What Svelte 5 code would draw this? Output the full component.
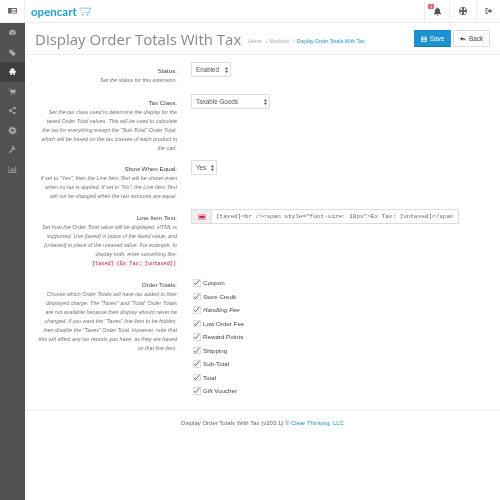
<script>
const navIcons = [
	{ d: "M8 3a6 6 0 0 0-6 6c0 1.2.3 2.2.9 3h10.2c.6-.8.9-1.8.9-3a6 6 0 0 0-6-6zM8 10a1.2 1.2 0 0 1-.6-2.2L10.500 5.500 9.200 8.900A1.200 1.200 0 0 1 8 10z" },
	{ d: "M1 3h5l8 7-4.500 4.500L2 7zM4 5a1 1 0 1 0 0 .1z" },
	{ d: "M6 2h4v2h2v3h2v3h-2v4h-3v-3H7v3H4v-4H2V7h2V4h2z", active: true },
	{ d: "M1 3h2.500l.5 2h10l-1.500 5.500H5L3 4.500H1zM5 12h2v2H5zM11 12h2v2h-2z" },
	{ d: "M12 1.500a2 2 0 1 1-1.600 3.200L6 7.200a2 2 0 0 1 0 1.600l4.400 2.500a2 2 0 1 1-.7 1.200L5 10a2.200 2.200 0 1 1 0-4l4.700-2.500A2 2 0 0 1 12 1.500z" },
	{ d: "M7 1h2l.4 2 1.300.5L12.400 2.400l1.400 1.400-1.100 1.700.5 1.300 2 .4v2l-2 .4-.5 1.300 1.100 1.700-1.400 1.400-1.700-1.100-1.300.5L9 15H7l-.4-2-1.300-.5-1.700 1.100-1.400-1.400 1.100-1.700-.5-1.300-2-.4v-2l2-.4.5-1.300-1.100-1.700 1.400-1.400 1.700 1.100 1.300-.5zM8 5.500a2.500 2.500 0 1 0 0 5 2.500 2.500 0 0 0 0-5z" },
	{ d: "M14 4.500a4 4 0 0 1-5.300 3.800L3.500 14.500 1.500 12.700 7.700 7.300A4 4 0 0 1 11.500 1L9.500 3.500l1 2 2 .5z" },
	{ d: "M1 2h1v11h13v1H1zM4 8h1.500v4H4zM7 5h1.500v7H7zM10 7h1.500v5H10zM13 3h1.500v9H13z" }
];
const totals = [
	{ name: "Coupon" },
	{ name: "Store Credit" },
	{ name: "Handling Fee", italic: true },
	{ name: "Low Order Fee" },
	{ name: "Reward Points" },
	{ name: "Shipping" },
	{ name: "Sub-Total" },
	{ name: "Total" },
	{ name: "Gift Voucher" }
];
const lineItem = `[taxed]<br /><span style="font-size: 10px">Ex Tax: [untaxed]</span>`;
</script>

<div class="page">
	<header>
		<button class="toggle" aria-label="menu">
			<svg viewBox="0 0 16 10" width="9" height="5.500"><path fill="#666" d="M0 0h16v10H0zM6 2v1.500h8V2zM6 4.500V6h8V4.500zM6 7v1.500h8V7z" fill-rule="evenodd"/></svg>
		</button>
		<div class="logo">
			<span>opencart</span>
			<svg viewBox="0 0 14 10" width="13" height="9"><path fill="none" stroke="#23a1d1" stroke-width="0.6" d="M0 1.300h13.500M12.500 1.300l-1.800 4.700H7M1 3.500h1.500M3 6h1.500"/><circle cx="4" cy="8.600" r=".8" fill="#23a1d1"/><circle cx="9.500" cy="8.600" r=".8" fill="#23a1d1"/></svg>
		</div>
		<div class="spacer"></div>
		<div class="hbtn bell">
			<svg viewBox="0 0 16 16" width="9" height="9"><path fill="#555" d="M8 1a1 1 0 0 1 1 1c2.300.5 3.500 2.300 3.500 5 0 3 1 4 2 5v1h-13v-1c1-1 2-2 2-5 0-2.700 1.200-4.500 3.500-5a1 1 0 0 1 1-1zM6.500 14h3a1.500 1.500 0 0 1-3 0z"/></svg>
			<span class="badge">1</span>
		</div>
		<div class="hbtn globe">
			<svg viewBox="0 0 16 16" width="8" height="8"><path fill="#666" fill-rule="evenodd" d="M8 0a8 8 0 1 1 0 16A8 8 0 0 1 8 0zM6 1.500A6.800 6.800 0 0 0 1.400 6H6zM10 1.500V6h4.600A6.800 6.800 0 0 0 10 1.500zM6 10H1.400A6.800 6.800 0 0 0 6 14.500zM10 10v4.500a6.800 6.800 0 0 0 4.600-4.500z"/></svg>
		</div>
		<div class="hbtn exit">
			<svg viewBox="0 0 16 16" width="8" height="8"><path fill="#777" d="M6 2H1v12h5v-2H3V4h3zM9 3l6 5-6 5v-3H5V6h4z"/></svg>
		</div>
	</header>

	<div class="main">
		<nav>
			{#each navIcons as icon}
				<div class="nav-item" class:active={icon.active}>
					<svg viewBox="0 0 16 16" width="9" height="9"><path fill-rule="evenodd" d={icon.d}/></svg>
				</div>
			{/each}
		</nav>

		<div class="content">
			<div class="heading">
				<h1>Display Order Totals With Tax</h1>
				<div class="crumbs">
					<span>Home</span><i>/</i><span>Modules</span><i>/</i><a href="#top">Display Order Totals With Tax</a>
				</div>
				<div class="spacer"></div>
				<button class="btn save">
					<svg viewBox="0 0 16 16" width="6" height="6"><path fill="#fff" fill-rule="evenodd" d="M1 1h11l3 3v11H1zM4 2.500V6h7V2.500zM4 9v4.500h8V9z"/></svg>
					Save
				</button>
				<button class="btn back">
					<svg viewBox="0 0 16 16" width="6" height="6"><path fill="#444" d="M6 2v3.500c5 0 9 1.500 9 8.500-1.500-3.500-4.500-4.500-9-4.500V13L0 7.500z"/></svg>
					Back
				</button>
			</div>

			<form>
				<div class="row status">
					<div class="label">
						<strong>Status:</strong>
						<p>Set the status for this extension.</p>
					</div>
					<div class="field">
						<span class="sel sel-status">
							<select><option>Enabled</option></select>
							<svg viewBox="0 0 4 8" width="3" height="6"><path fill="#444" d="M2 0l2 3H0zM2 8L0 5h4z"/></svg>
						</span>
					</div>
				</div>

				<div class="row tax">
					<div class="label">
						<strong>Tax Class:</strong>
						<p>Set the tax class used to determine the display for the<br>taxed Order Total values. This will be used to calculate<br>the tax for everything except the "Sub-Total" Order Total,<br>which will be based on the tax classes of each product in<br>the cart.</p>
					</div>
					<div class="field">
						<span class="sel sel-tax">
							<select><option>Taxable Goods</option></select>
							<svg viewBox="0 0 4 8" width="3" height="6"><path fill="#444" d="M2 0l2 3H0zM2 8L0 5h4z"/></svg>
						</span>
					</div>
				</div>

				<div class="row equal">
					<div class="label">
						<strong>Show When Equal:</strong>
						<p>If set to "Yes", then the Line Item Text will be shown even<br>when no tax is applied. If set to "No", the Line Item Text<br>will not be changed when the two amounts are equal.</p>
					</div>
					<div class="field">
						<span class="sel sel-yes">
							<select><option>Yes</option></select>
							<svg viewBox="0 0 4 8" width="3" height="6"><path fill="#444" d="M2 0l2 3H0zM2 8L0 5h4z"/></svg>
						</span>
					</div>
				</div>

				<div class="row text">
					<div class="label">
						<strong>Line Item Text:</strong>
						<p>Set how the Order Total value will be displayed. HTML is<br>supported. Use [taxed] in place of the taxed value, and<br>[untaxed] in place of the untaxed value. For example, to<br>display both, enter something like:<br><code>[taxed] (Ex Tax: [untaxed])</code></p>
					</div>
					<div class="field">
						<div class="group">
							<span class="addon">
								<svg viewBox="0 0 12 9" width="8" height="6"><rect width="12" height="9" fill="#e9aab8"/><rect x="2" y="3" width="8" height="3" fill="#c8263c"/></svg>
							</span>
							<input value={lineItem} />
						</div>
					</div>
				</div>

				<div class="row orders">
					<div class="label">
						<strong>Order Totals:</strong>
						<p>Choose which Order Totals will have tax added to their<br>displayed charge. The "Taxes" and "Total" Order Totals<br>are not available because their display should never be<br>changed. If you want the "Taxes" line item to be hidden,<br>then disable the "Taxes" Order Total. However, note that<br>this will affect any tax reports you have, as they are based<br>on that line item.</p>
					</div>
					<div class="field checks">
						{#each totals as t}
							<label class:italic={t.italic}>
								<span class="box">
									<svg viewBox="0 0 10 10" width="7" height="7"><path fill="none" stroke="#333" stroke-width="1.100" d="M1.500 5.500l2.300 2.500L9 1.500"/></svg>
								</span>
								{t.name}
							</label>
						{/each}
					</div>
				</div>
			</form>

			<footer>Display Order Totals With Tax (v203.1) © <a href="#top">Clear Thinking, LLC</a></footer>
		</div>
	</div>
</div>

<style>
:global(body) {
	margin: 0;
	background: #fff;
}
.page {
	width: 500px;
	height: 500px;
	overflow: hidden;
	font-family: "Liberation Sans", sans-serif;
	color: #555;
	filter: blur(0.3px);
}
header {
	display: flex;
	align-items: stretch;
	box-sizing: border-box;
	height: 23px;
	border-bottom: 1px solid #eee;
}
.toggle {
	width: 25px;
	padding: 0;
	border: 0;
	border-right: 1px solid #eee;
	background: #fff;
	display: flex;
	align-items: center;
	justify-content: center;
}
.logo {
	display: flex;
	align-items: center;
	gap: 2px;
	padding-left: 6px;
	color: #23a1d1;
	font-family: Lato, sans-serif;
	font-weight: 700;
	font-size: 11.500px;
}
.spacer {
	flex: 1;
}
.hbtn {
	position: relative;
	border-left: 1px solid #eee;
	display: flex;
	align-items: center;
	justify-content: center;
}
.bell { width: 24px; }
.globe { width: 26px; }
.exit { width: 23px; }
.badge {
	position: absolute;
	left: 3px;
	top: 4px;
	width: 6px;
	height: 5px;
	background: #e8616d;
	color: #fff;
	font-size: 4px;
	line-height: 5px;
	text-align: center;
	border-radius: 1px;
}
.main {
	display: flex;
	height: 477px;
}
nav {
	width: 25px;
	flex: none;
	background: #515151;
}
.nav-item {
	height: 19.500px;
	display: flex;
	align-items: center;
	justify-content: center;
	fill: #aaa;
}
.nav-item.active {
	background: #3f3f3f;
	fill: #eee;
}
.content {
	flex: 1;
	min-width: 0;
}
.heading {
	display: flex;
	align-items: center;
	height: 31px;
	padding: 0 10px;
	border-bottom: 1px solid #eee;
}
h1 {
	margin: 0;
	font-family: "Open Sans", sans-serif;
	font-size: 15px;
	font-weight: 400;
	color: #888;
	white-space: nowrap;
}
.crumbs {
	margin-left: 7px;
	padding-top: 4px;
	font-size: 5.200px;
	color: #aaa;
	white-space: nowrap;
}
.crumbs i {
	margin: 0 2px 0 4px;
	font-style: normal;
}
.crumbs a, footer a {
	color: #1e91cf;
	text-decoration: none;
}
.btn {
	display: flex;
	align-items: center;
	justify-content: center;
	gap: 3px;
	width: 37px;
	height: 17px;
	padding: 0;
	border-radius: 1px;
	font-family: "Liberation Sans", sans-serif;
	font-size: 6.400px;
}
.save {
	margin-right: 2px;
	background: #1e91cf;
	border: 1px solid #1e91cf;
	border-bottom-color: #1978ab;
	color: #fff;
}
.back {
	background: #fff;
	border: 1px solid #ddd;
	color: #444;
}
form {
	padding-top: 7px;
}
.row {
	display: grid;
	grid-template-columns: 152px 1fr;
	column-gap: 14px;
}
.status { height: 32px; }
.tax { height: 66px; }
.equal { height: 49px; }
.text { height: 67px; }
.orders { height: 134px; }
.label {
	text-align: right;
}
strong {
	display: block;
	font-weight: 400;
	font-size: 6.200px;
	line-height: 9px;
	padding-top: 3.500px;
	color: #444;
}
p {
	margin: 1.500px 0 0;
	font-style: italic;
	font-size: 5.400px;
	line-height: 9px;
	color: #777;
	white-space: nowrap;
}
code {
	font-family: "Liberation Mono", monospace;
	font-style: normal;
	font-size: 5.200px;
	color: #c7254e;
	background: #f9f2f4;
	padding: 0 1px;
}
.sel {
	position: relative;
	display: block;
}
.sel select {
	display: block;
	width: 100%;
	height: 15px;
	padding: 0 4px;
	box-sizing: border-box;
	appearance: none;
	border: 1px solid #ddd;
	border-radius: 1px;
	background: #fff;
	font-family: "Liberation Sans", sans-serif;
	font-size: 6.300px;
	color: #555;
}
.sel svg {
	position: absolute;
	right: 3.500px;
	top: 4.500px;
}
.sel-status { width: 40px; }
.sel-tax { width: 79px; }
.sel-yes { width: 26px; }
.group {
	display: flex;
	height: 15px;
	width: 268px;
}
.addon {
	width: 20px;
	flex: none;
	box-sizing: border-box;
	display: flex;
	align-items: center;
	justify-content: center;
	background: #eee;
	border: 1px solid #ddd;
	border-right: 0;
}
input {
	flex: 1;
	min-width: 0;
	box-sizing: border-box;
	padding: 0 4px;
	border: 1px solid #ddd;
	font-family: "Liberation Mono", monospace;
	font-size: 6px;
	color: #666;
}
.checks {
	display: flex;
	flex-direction: column;
	padding-left: 2px;
	font-size: 6.200px;
}
.checks label {
	display: flex;
	align-items: center;
	gap: 2.500px;
	height: 13.500px;
	color: #444;
}
.checks label.italic {
	font-style: italic;
}
.box {
	width: 7.500px;
	height: 7.500px;
	flex: none;
	box-sizing: border-box;
	border: 1px solid #ddd;
	display: flex;
	align-items: center;
	justify-content: center;
}
.box svg {
	flex: none;
}
footer {
	border-top: 1px solid #eee;
	padding-top: 9px;
	text-align: center;
	font-size: 6px;
	color: #666;
}
</style>
